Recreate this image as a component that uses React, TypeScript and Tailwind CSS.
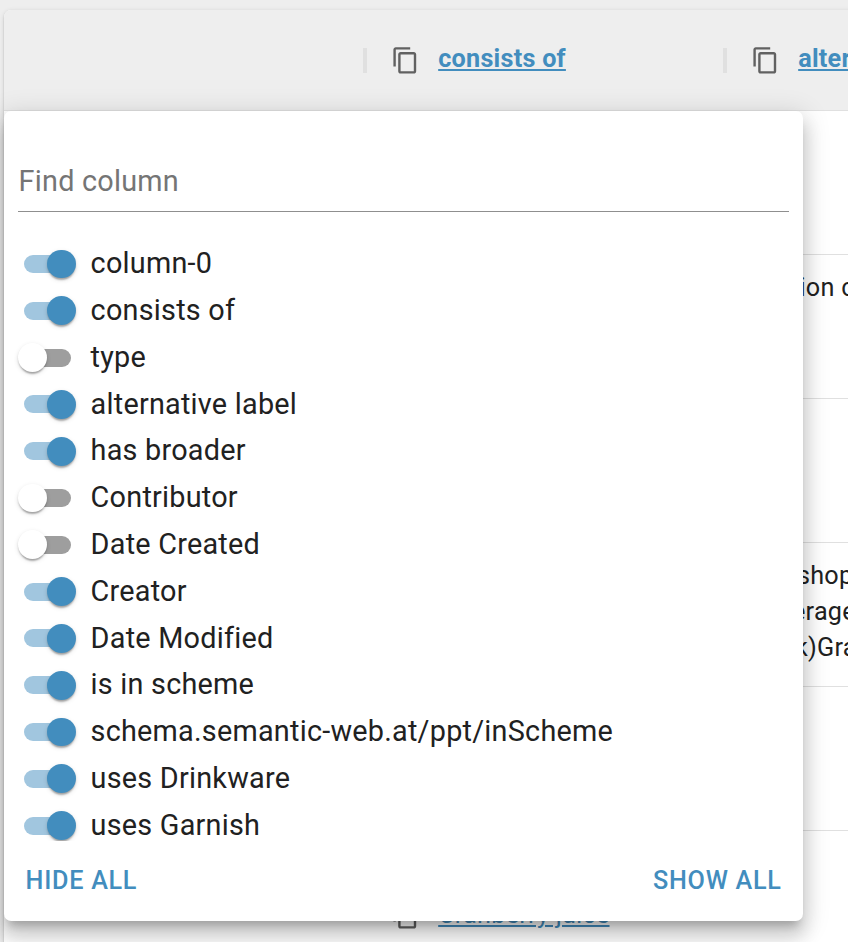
import React from "react";

const columns: { label: string; on: boolean }[] = [
  { label: "column-0", on: true },
  { label: "consists of", on: true },
  { label: "type", on: false },
  { label: "alternative label", on: true },
  { label: "has broader", on: true },
  { label: "Contributor", on: false },
  { label: "Date Created", on: false },
  { label: "Creator", on: true },
  { label: "Date Modified", on: true },
  { label: "is in scheme", on: true },
  { label: "schema.semantic-web.at/ppt/inScheme", on: true },
  { label: "uses Drinkware", on: true },
  { label: "uses Garnish", on: true },
];

function CopyIcon() {
  return (
    <svg viewBox="0 0 24 24" className="size-[28.8px] shrink-0" fill="#616161">
      <path d="M16 1H4c-1.1 0-2 .9-2 2v14h2V3h12V1zm3 4H8c-1.1 0-2 .9-2 2v14c0 1.1.9 2 2 2h11c1.1 0 2-.9 2-2V7c0-1.1-.9-2-2-2zm0 16H8V7h11v14z" />
    </svg>
  );
}

function Switch({ on }: { on: boolean }) {
  return (
    <span className={`flex h-[28.8px] w-[58px] shrink-0 items-center ${on ? "justify-end" : "justify-start"}`}>
      {on && <span className="-mr-[24px] h-[18px] w-[46.8px] rounded-full bg-[#a1c6df]" />}
      <span
        className={`z-10 size-[28.8px] shrink-0 rounded-full shadow-[0_3.6px_1.8px_-1.8px_rgba(0,0,0,0.2),0_1.8px_1.8px_0_rgba(0,0,0,0.14),0_1.8px_5.4px_0_rgba(0,0,0,0.12)] ${
          on ? "bg-[#428dbe]" : "bg-white"
        }`}
      />
      {!on && <span className="-ml-[22.8px] h-[18px] w-[46.8px] rounded-full bg-[#9e9e9e]" />}
    </span>
  );
}

function HeaderCell({ label }: { label: string }) {
  return (
    <div className="flex h-full w-[360px] shrink-0 items-start">
      <span className="mt-[38px] h-[25px] w-[3.6px] shrink-0 bg-[#e0e0e0]" />
      <span className="mt-9 ml-[24.4px] shrink-0">
        <CopyIcon />
      </span>
      <a className="mt-[31px] ml-[18.4px] text-[25.2px] leading-9 font-bold whitespace-nowrap text-[#428dbe] underline decoration-2 underline-offset-2">
        {label}
      </a>
    </div>
  );
}

function Row({ children }: { children?: React.ReactNode }) {
  return <div className="flex h-36 shrink-0 border-b border-[#e0e0e0]">{children}</div>;
}

export default function App() {
  return (
    <div
      className="relative h-[942px] w-[848px] overflow-hidden bg-[#eeeeee] pt-2.5 pl-1 text-[#212121]"
      style={{ fontFamily: 'Roboto, "Liberation Sans", sans-serif' }}
    >
      <div className="flex h-[1000px] w-[1200px] flex-col overflow-hidden rounded-[7px] bg-white text-[25.2px] leading-9 tracking-[0.25px] shadow-[0_3.6px_1.8px_-1.8px_rgba(0,0,0,0.2),0_1.8px_1.8px_0_rgba(0,0,0,0.14),0_1.8px_5.4px_0_rgba(0,0,0,0.12)]">
        <div className="flex h-[101px] shrink-0 border-b border-[#e0e0e0] bg-[#eeeeee] pl-[359px]">
          <HeaderCell label="consists of" />
          <HeaderCell label="alternative label" />
        </div>
        <Row />
        <Row>
          <div className="pt-[15px] pl-[795.5px]">ion c</div>
        </Row>
        <Row />
        <Row>
          <div className="flex flex-col pt-[15px] pl-[788px]">
            <span className="pl-[5px]">shop</span>
            <span>erage</span>
            <span className="pl-[3px]">k)Gra</span>
          </div>
        </Row>
        <Row />
        <Row>
          <div className="flex items-start pt-[70px] pl-[387px]">
            <CopyIcon />
            <a className="-mt-1 ml-[18.4px] text-[#428dbe] underline decoration-2 underline-offset-2">Cranberry juice</a>
          </div>
        </Row>
      </div>

      <div className="absolute top-[111px] left-1 flex h-[810px] w-[799px] flex-col rounded-[7.2px] bg-white px-3.5 shadow-[0_9px_9px_-5.4px_rgba(0,0,0,0.2),0_14.4px_18px_1.8px_rgba(0,0,0,0.14),0_5.4px_25.2px_3.6px_rgba(0,0,0,0.12)]">
        <div className="flex h-[101px] shrink-0 items-end border-b border-[#8f8f8f] pb-3">
          <input
            className="w-full bg-transparent pl-[0.6px] text-[28.8px] leading-9 tracking-[0.24px] outline-none placeholder:text-[#757575]"
            placeholder="Find column"
          />
        </div>
        <div className="-mx-3.5 mt-[28.6px] flex h-[600px] shrink-0 flex-col overflow-hidden px-3.5">
          {columns.map((c) => (
            <label key={c.label} className="flex h-[46.8px] shrink-0 items-center">
              <Switch on={c.on} />
              <span className="mb-[0.4px] ml-[14.6px] text-[28.8px] leading-[43.2px] tracking-[0.24px] whitespace-nowrap">{c.label}</span>
            </label>
          ))}
        </div>
        <div className="mt-[21.4px] flex items-center justify-between pr-[7.4px] pl-[7.6px] text-[25.2px] leading-[38px] font-medium tracking-[0.72px] text-[#428dbe]">
          <button>HIDE ALL</button>
          <button>SHOW ALL</button>
        </div>
      </div>
    </div>
  );
}
